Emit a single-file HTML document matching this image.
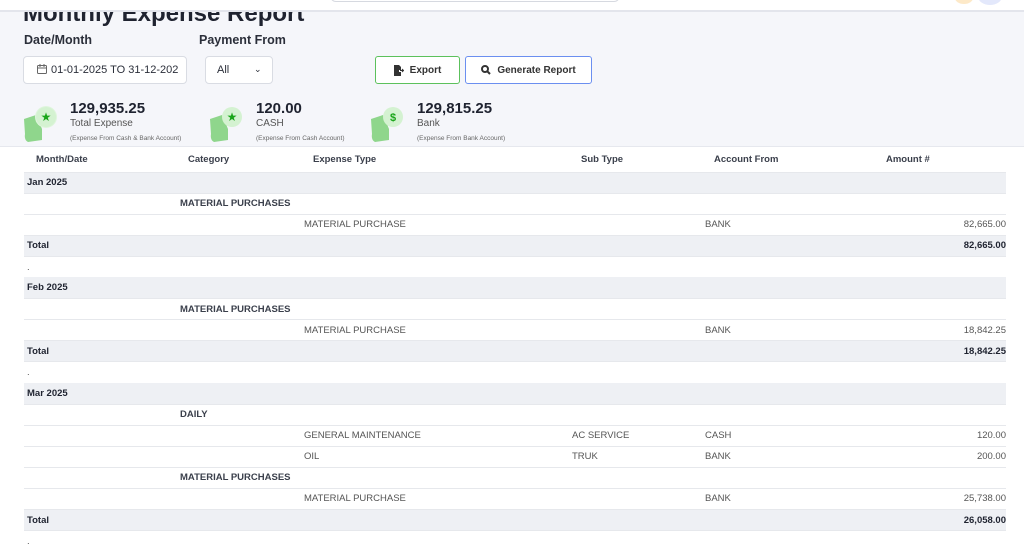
<!DOCTYPE html>
<html><head><meta charset="utf-8"><style>
*{margin:0;padding:0;box-sizing:border-box}
body{width:1024px;height:544px;overflow:hidden;background:#fff;font-family:"Liberation Sans",sans-serif;color:#2b2f3a;position:relative}
.top{position:absolute;left:0;top:0;width:1024px;height:12px;background:#fff;border-bottom:2px solid #e3e5ec;z-index:2}
.search{position:absolute;left:330px;top:-10px;width:290px;height:12px;border:1px solid #d6d9e0;border-radius:6px;background:#fff;z-index:3}
.gray{position:absolute;left:0;top:0;width:1024px;height:147px;background:#f5f6fa;border-bottom:1px solid #e6e8ee}
.abs{position:absolute;white-space:nowrap}
h1{position:absolute;left:23px;top:0px;font-size:24px;font-weight:bold;color:#1f2330;z-index:1}
.lbl{font-size:12.5px;font-weight:bold;color:#2b2f3a}
.inp{position:absolute;background:#fff;border:1px solid #d9dce3;border-radius:4px;font-size:11px;color:#2b2f3a}
.btn{position:absolute;top:56px;height:28px;border-radius:3px;background:#fff;font-size:10px;font-weight:bold;display:flex;align-items:center;justify-content:center;gap:6px;color:#333}
.big{font-size:15px;font-weight:bold;color:#1f2330}
.sm{font-size:10px;color:#555}
.xs{font-size:6.5px;color:#666}
.ic{position:absolute}
table{position:absolute;left:24px;top:148px;width:982px;border-collapse:collapse;font-size:9.5px}
td,th{height:21.1px;padding:0;border-bottom:1px solid #e6e8ec;white-space:nowrap}
th{text-align:left;font-weight:bold;color:#3a3f4b;height:24px}
tr.g td{background:#eef0f4;font-weight:bold;color:#1f2330}
td{color:#555}
.c td:nth-child(2){font-weight:bold;color:#3a3f4b}
.r{text-align:right}
tr.d td{border-bottom:none}
</style></head><body>
<div class="gray"></div>
<h1>Monthly Expense Report</h1>
<div class="top"></div><div class="search"></div>
<div class="abs" style="left:955px;top:-8px;width:18px;height:12px;border-radius:50%;background:#fde9c8;z-index:3"></div>
<div class="abs" style="left:978px;top:-12px;width:24px;height:17px;border-radius:50%;background:#e3e8fb;z-index:3"></div>
<div class="abs lbl" style="left:24px;top:33px">Date/Month</div>
<div class="abs lbl" style="left:199px;top:33px">Payment From</div>
<div class="inp" style="left:23px;top:56px;width:164px;height:28px;padding:7px 0 0 13px">
<svg width="10" height="10" viewBox="0 0 10 10" style="vertical-align:-1px;margin-right:4px"><rect x="0.5" y="1.5" width="9" height="8" rx="1" fill="none" stroke="#666"/><path d="M0.5 4h9M3 0v3M7 0v3" stroke="#666"/></svg>01-01-2025 TO 31-12-202</div>
<div class="inp" style="left:205px;top:56px;width:68px;height:28px;padding:7px 0 0 11px">All<span style="position:absolute;left:48px;top:7px;font-size:9px">&#8964;</span></div>
<div class="btn" style="left:375px;width:85px;border:1px solid #5cc15c"><svg width="10" height="11" viewBox="0 0 10 11"><path d="M0 0h5l2 2v3H5v2h2v4H0z" fill="#333"/><path d="M6 5.5h3M8 4l1.5 1.5L8 7" stroke="#333" fill="none"/></svg>Export</div>
<div class="btn" style="left:465px;width:127px;border:1px solid #6b8ff0"><svg width="10" height="10" viewBox="0 0 10 10"><circle cx="4" cy="4" r="3" fill="none" stroke="#333" stroke-width="2"/><path d="M6 6l3 3" stroke="#333" stroke-width="2"/></svg>Generate Report</div>

<svg class="ic" style="left:22px;top:104px" width="40" height="40"><path d="M2 15 L14 11 Q18 20 20 25 L20 36 L6 38 Q2 36 3 30 Z" fill="#8fd68c"/><circle cx="24" cy="13" r="11" fill="#dff5dd"/><circle cx="24" cy="13" r="10" fill="#d4f2d1"/><text x="24" y="17" font-size="12" text-anchor="middle" fill="#1aa51a">★</text></svg>
<div class="abs big" style="left:70px;top:100px">129,935.25</div>
<div class="abs sm" style="left:70px;top:118px">Total Expense</div>
<div class="abs xs" style="left:70px;top:135px">(Expense From Cash &amp; Bank Account)</div>

<svg class="ic" style="left:208px;top:104px" width="40" height="40"><path d="M2 15 L14 11 Q18 20 20 25 L20 36 L6 38 Q2 36 3 30 Z" fill="#8fd68c"/><circle cx="24" cy="13" r="10" fill="#d4f2d1"/><text x="24" y="17" font-size="12" text-anchor="middle" fill="#1aa51a">★</text></svg>
<div class="abs big" style="left:256px;top:100px">120.00</div>
<div class="abs sm" style="left:256px;top:118px">CASH</div>
<div class="abs xs" style="left:256px;top:135px">(Expense From Cash Account)</div>

<svg class="ic" style="left:369px;top:104px" width="40" height="40"><path d="M2 15 L14 11 Q18 20 20 25 L20 36 L6 38 Q2 36 3 30 Z" fill="#8fd68c"/><circle cx="24" cy="13" r="10" fill="#d4f2d1"/><text x="24" y="17" font-size="11" font-weight="bold" text-anchor="middle" fill="#1aa51a">$</text></svg>
<div class="abs big" style="left:417px;top:100px">129,815.25</div>
<div class="abs sm" style="left:417px;top:118px">Bank</div>
<div class="abs xs" style="left:417px;top:135px">(Expense From Bank Account)</div>

<table>
<colgroup><col style="width:156px"><col style="width:124px"><col style="width:268px"><col style="width:133px"><col style="width:180px"><col></colgroup>
<tr><th style="padding-left:12px">Month/Date</th><th style="padding-left:8px">Category</th><th style="padding-left:9px">Expense Type</th><th style="padding-left:9px">Sub Type</th><th style="padding-left:9px">Account From</th><th style="padding-left:1px">Amount #</th></tr>
<tr class="g"><td style="padding-left:3px">Jan 2025</td><td></td><td></td><td></td><td></td><td></td></tr>
<tr class="c"><td></td><td>MATERIAL PURCHASES</td><td></td><td></td><td></td><td></td></tr>
<tr><td></td><td></td><td>MATERIAL PURCHASE</td><td></td><td>BANK</td><td class="r">82,665.00</td></tr>
<tr class="g"><td style="padding-left:3px">Total</td><td></td><td></td><td></td><td></td><td class="r">82,665.00</td></tr>
<tr class="d"><td style="padding-left:3px">.</td><td></td><td></td><td></td><td></td><td></td></tr>
<tr class="g"><td style="padding-left:3px">Feb 2025</td><td></td><td></td><td></td><td></td><td></td></tr>
<tr class="c"><td></td><td>MATERIAL PURCHASES</td><td></td><td></td><td></td><td></td></tr>
<tr><td></td><td></td><td>MATERIAL PURCHASE</td><td></td><td>BANK</td><td class="r">18,842.25</td></tr>
<tr class="g"><td style="padding-left:3px">Total</td><td></td><td></td><td></td><td></td><td class="r">18,842.25</td></tr>
<tr class="d"><td style="padding-left:3px">.</td><td></td><td></td><td></td><td></td><td></td></tr>
<tr class="g"><td style="padding-left:3px">Mar 2025</td><td></td><td></td><td></td><td></td><td></td></tr>
<tr class="c"><td></td><td>DAILY</td><td></td><td></td><td></td><td></td></tr>
<tr><td></td><td></td><td>GENERAL MAINTENANCE</td><td>AC SERVICE</td><td>CASH</td><td class="r">120.00</td></tr>
<tr><td></td><td></td><td>OIL</td><td>TRUK</td><td>BANK</td><td class="r">200.00</td></tr>
<tr class="c"><td></td><td>MATERIAL PURCHASES</td><td></td><td></td><td></td><td></td></tr>
<tr><td></td><td></td><td>MATERIAL PURCHASE</td><td></td><td>BANK</td><td class="r">25,738.00</td></tr>
<tr class="g"><td style="padding-left:3px">Total</td><td></td><td></td><td></td><td></td><td class="r">26,058.00</td></tr>
<tr class="d"><td style="padding-left:3px">.</td><td></td><td></td><td></td><td></td><td></td></tr>
</table>
</body></html>
